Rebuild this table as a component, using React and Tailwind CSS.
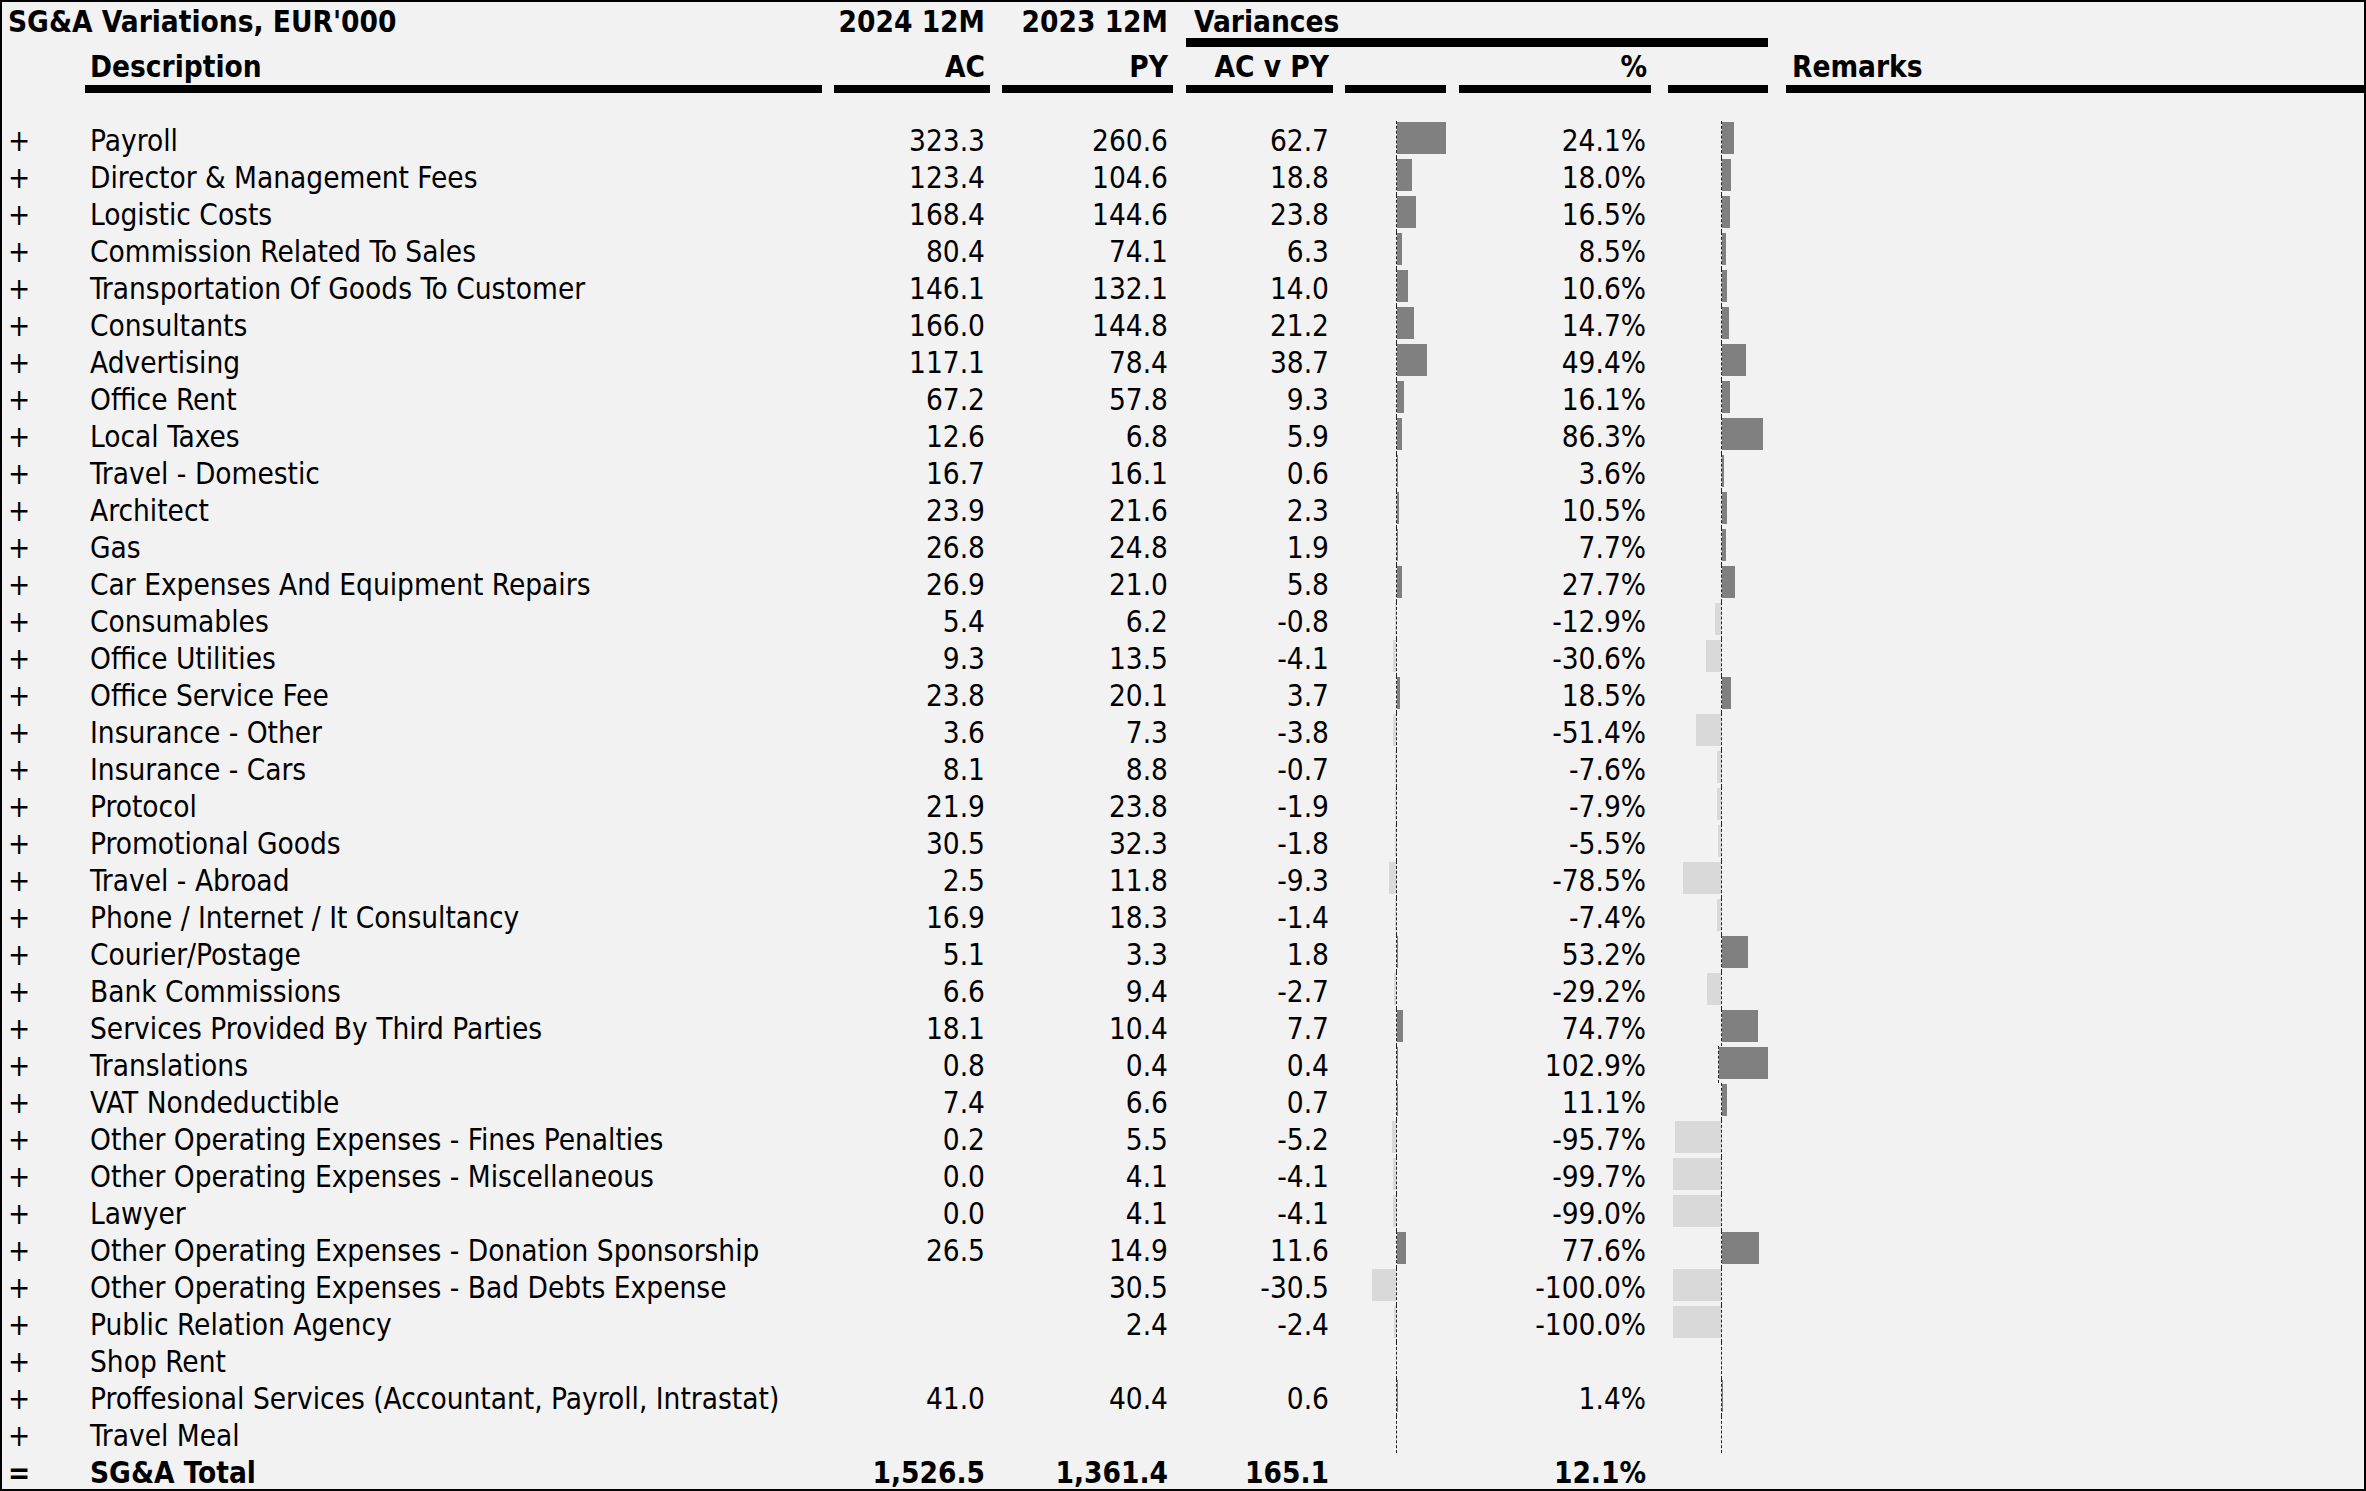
import React from 'react';

// SG&A variance report (AC vs PY) with inline variance bars
const rows = [
    ['Payroll', '323.3', '260.6', '62.7', '24.1%'],
    ['Director & Management Fees', '123.4', '104.6', '18.8', '18.0%'],
    ['Logistic Costs', '168.4', '144.6', '23.8', '16.5%'],
    ['Commission Related To Sales', '80.4', '74.1', '6.3', '8.5%'],
    ['Transportation Of Goods To Customer', '146.1', '132.1', '14.0', '10.6%'],
    ['Consultants', '166.0', '144.8', '21.2', '14.7%'],
    ['Advertising', '117.1', '78.4', '38.7', '49.4%'],
    ['Office Rent', '67.2', '57.8', '9.3', '16.1%'],
    ['Local Taxes', '12.6', '6.8', '5.9', '86.3%'],
    ['Travel - Domestic', '16.7', '16.1', '0.6', '3.6%'],
    ['Architect', '23.9', '21.6', '2.3', '10.5%'],
    ['Gas', '26.8', '24.8', '1.9', '7.7%'],
    ['Car Expenses And Equipment Repairs', '26.9', '21.0', '5.8', '27.7%'],
    ['Consumables', '5.4', '6.2', '-0.8', '-12.9%'],
    ['Office Utilities', '9.3', '13.5', '-4.1', '-30.6%'],
    ['Office Service Fee', '23.8', '20.1', '3.7', '18.5%'],
    ['Insurance - Other', '3.6', '7.3', '-3.8', '-51.4%'],
    ['Insurance - Cars', '8.1', '8.8', '-0.7', '-7.6%'],
    ['Protocol', '21.9', '23.8', '-1.9', '-7.9%'],
    ['Promotional Goods', '30.5', '32.3', '-1.8', '-5.5%'],
    ['Travel - Abroad', '2.5', '11.8', '-9.3', '-78.5%'],
    ['Phone / Internet / It Consultancy', '16.9', '18.3', '-1.4', '-7.4%'],
    ['Courier/Postage', '5.1', '3.3', '1.8', '53.2%'],
    ['Bank Commissions', '6.6', '9.4', '-2.7', '-29.2%'],
    ['Services Provided By Third Parties', '18.1', '10.4', '7.7', '74.7%'],
    ['Translations', '0.8', '0.4', '0.4', '102.9%'],
    ['VAT Nondeductible', '7.4', '6.6', '0.7', '11.1%'],
    ['Other Operating Expenses - Fines Penalties', '0.2', '5.5', '-5.2', '-95.7%'],
    ['Other Operating Expenses - Miscellaneous', '0.0', '4.1', '-4.1', '-99.7%'],
    ['Lawyer', '0.0', '4.1', '-4.1', '-99.0%'],
    ['Other Operating Expenses - Donation Sponsorship', '26.5', '14.9', '11.6', '77.6%'],
    ['Other Operating Expenses - Bad Debts Expense', '', '30.5', '-30.5', '-100.0%'],
    ['Public Relation Agency', '', '2.4', '-2.4', '-100.0%'],
    ['Shop Rent', '', '', '', ''],
    ['Proffesional Services (Accountant, Payroll, Intrastat)', '41.0', '40.4', '0.6', '1.4%'],
    ['Travel Meal', '', '', '', ''],
];

const GRID = 'grid grid-cols-[83px_737px_168px_183px_160px_113px_205px_117px_1fr]';

const Bar = ({ value, scale, leftClass }) => {
    const num = parseFloat(value);
    const w = isNaN(num) ? 0 : Math.abs(num) * scale;
    return (
        <div className="flex h-[37px]">
            <div className={`${leftClass} flex justify-end pt-px`}>
                {num < 0 && <div className="h-[32px] bg-[#d9d9d9]" style={{ width: w }} />}
            </div>
            <div className="flex-1 border-l border-dashed border-[#222] pt-px">
                {num > 0 && <div className="h-[32px] bg-[#808080]" style={{ width: w }} />}
            </div>
        </div>
    );
};

const HeadCell = ({ children, className = '' }) => (
    <div className={`h-[46px] pt-[1.5px] border-b-8 border-black ${className}`}>{children}</div>
);

export default function App() {
    return (
        <div className="w-[2366px] h-[1491px] overflow-hidden border-2 border-black bg-[#f2f2f2] text-black text-[29.5px] leading-[37px] font-['DejaVu_Sans_Condensed','DejaVu_Sans',sans-serif] font-stretch-condensed">
            {/* header line 1 */}
            <div className={`${GRID} h-[45px] font-bold`}>
                <div className="col-span-2 pl-[6px] pt-[2px] whitespace-nowrap">SG&amp;A Variations, EUR'000</div>
                <div className="pr-[5px] pt-[2px] text-right">2024 12M</div>
                <div className="pr-[5px] pt-[2px] text-right">2023 12M</div>
                <div className="col-span-4 pl-[13px]">
                    <div className="h-[45px] border-b-[9px] border-black pl-[8px] pt-[2px]">Variances</div>
                </div>
                <div />
            </div>

            {/* header line 2 */}
            <div className={`${GRID} font-bold`}>
                <div />
                <HeadCell className="pl-[5px]">Description</HeadCell>
                <div className="pl-3">
                    <HeadCell className="pr-[5px] text-right">AC</HeadCell>
                </div>
                <div className="pl-3">
                    <HeadCell className="pr-[5px] text-right">PY</HeadCell>
                </div>
                <div className="pl-[13px]">
                    <HeadCell className="pr-[4px] text-right">AC v PY</HeadCell>
                </div>
                <div className="pl-3">
                    <HeadCell />
                </div>
                <div className="pl-[13px]">
                    <HeadCell className="pr-[4px] text-right">%</HeadCell>
                </div>
                <div className="pl-[17px]">
                    <HeadCell />
                </div>
                <div className="pl-[18px]">
                    <HeadCell className="pl-[6px]">Remarks</HeadCell>
                </div>
            </div>

            <div className="h-[28px]" />

            {rows.map(([name, ac, py, diff, pct]) => (
                <div key={name} className={`${GRID} h-[37px] whitespace-nowrap`}>
                    <div className="pl-[6px] pt-[1.5px]">+</div>
                    <div className="pl-[5px] pt-[1.5px]">{name}</div>
                    <div className="pr-[5px] pt-[1.5px] text-right">{ac}</div>
                    <div className="pr-[5px] pt-[1.5px] text-right">{py}</div>
                    <div className="pr-[4px] pt-[1.5px] text-right">{diff}</div>
                    <div className="pl-3">
                        <Bar value={diff} scale={0.78} leftClass="w-[51px]" />
                    </div>
                    <div className="pr-[5px] pt-[1.5px] text-right">{pct}</div>
                    <div className="pl-[17px]">
                        <Bar value={pct} scale={0.48} leftClass="w-[53px]" />
                    </div>
                    <div />
                </div>
            ))}

            {/* total */}
            <div className={`${GRID} h-[37px] whitespace-nowrap font-bold`}>
                <div className="pl-[6px] pt-[1.5px]">=</div>
                <div className="pl-[5px] pt-[1.5px]">SG&amp;A Total</div>
                <div className="pr-[5px] pt-[1.5px] text-right">1,526.5</div>
                <div className="pr-[5px] pt-[1.5px] text-right">1,361.4</div>
                <div className="pr-[4px] pt-[1.5px] text-right">165.1</div>
                <div />
                <div className="pr-[5px] pt-[1.5px] text-right">12.1%</div>
                <div />
                <div />
            </div>
        </div>
    );
}
